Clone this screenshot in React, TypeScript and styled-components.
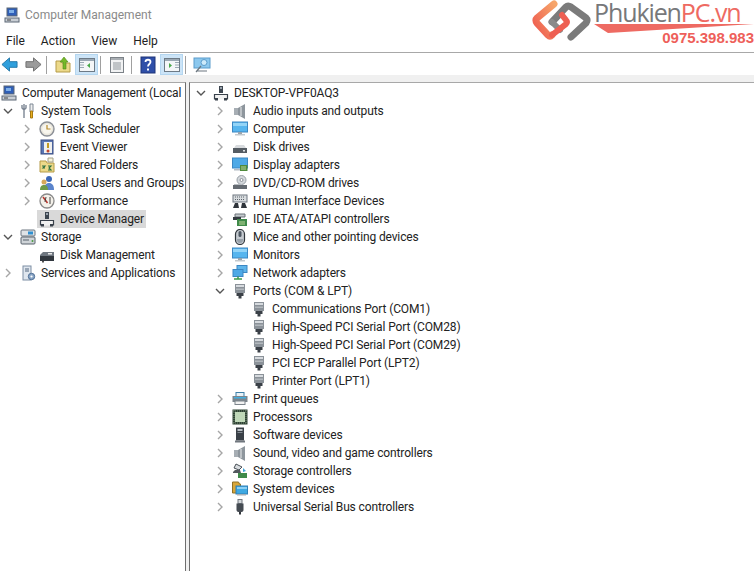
import React from "react";
import styled, { createGlobalStyle } from "styled-components";

const GlobalStyle = createGlobalStyle`
  html, body { margin: 0; padding: 0; background: #fff; }
  body { font-family: Roboto, "Open Sans", sans-serif; color: #1f1f1f; overflow: hidden; }
`;

type IconName =
  | "computer" | "tools" | "clock" | "event" | "shared" | "users" | "perf" | "device"
  | "storage" | "disk" | "services" | "audio" | "monitor" | "drive" | "display" | "dvd"
  | "hid" | "ide" | "mouse" | "network" | "port" | "printer" | "cpu" | "software"
  | "storagectl" | "system" | "usb";

const Glyph = ({ name }: { name: IconName }) => {
  switch (name) {
    case "computer":
      return (
        <>
          <rect x="3" y="1" width="10" height="8" fill="#2f5fb8" stroke="#5b6675" />
          <path d="M5 3h5v3H5z" fill="#7fb0e8" />
          <rect x="1" y="11" width="14" height="4" fill="#c9ced4" stroke="#5b6675" />
          <path d="M3 13h4" stroke="#444" />
        </>
      );
    case "tools":
      return (
        <>
          <path d="M4 1v5M2 2v3l2 2 2-2V2M4 7v8" stroke="#7d8794" strokeWidth="1.4" fill="none" />
          <path d="M10 1h3v8h-3z" fill="#efefef" stroke="#7d8794" />
          <path d="M10.5 8h2v7h-2z" fill="#e8b020" stroke="#a97a10" />
        </>
      );
    case "clock":
      return (
        <>
          <circle cx="8" cy="8" r="7" fill="#e9e6dc" stroke="#8b8f96" strokeWidth="1.4" />
          <circle cx="8" cy="8" r="4.8" fill="#f8f6ee" />
          <path d="M8 4v4h3.5" stroke="#b78a2a" strokeWidth="1.2" fill="none" />
        </>
      );
    case "event":
      return (
        <>
          <rect x="2" y="1" width="12" height="14" fill="#5a76b5" stroke="#3b4c80" />
          <rect x="5" y="3" width="8" height="11" fill="#f0f0ee" />
          <path d="M9 4v5" stroke="#c49a20" strokeWidth="2" />
          <circle cx="9" cy="12" r="1.5" fill="#c2472f" />
        </>
      );
    case "shared":
      return (
        <>
          <path d="M1 4h6l1 2h7v9H1z" fill="#ecd98a" stroke="#b59b48" />
          <path d="M9 1h5v4H9z" fill="#f6f1d8" stroke="#a3a08a" />
          <path d="M3 9h3l-2 2h2M9 9h3l-2 2 2 2H9" stroke="#2b6f40" strokeWidth="1.1" fill="none" />
        </>
      );
    case "users":
      return (
        <>
          <circle cx="10" cy="4" r="3" fill="#3c68b8" />
          <path d="M5 15c0-5 2-7 5-7s5 2 5 7z" fill="#5a84cc" />
          <circle cx="5" cy="7" r="2.5" fill="#d7a85a" />
          <path d="M1 15c0-4 2-5 4-5s4 1 4 5z" fill="#6f9a4a" />
        </>
      );
    case "perf":
      return (
        <>
          <circle cx="8" cy="8" r="7" fill="#f4f1ea" stroke="#8a8a8a" strokeWidth="1.3" />
          <path d="M4 4l4.5 6" stroke="#b9372e" strokeWidth="1.6" />
          <path d="M6 9l1-5M11 4v7" stroke="#444" strokeWidth="1" />
        </>
      );
    case "device":
      return (
        <>
          <rect x="6" y="1" width="4" height="7" fill="#3d4650" />
          <path d="M7 2h2v2H7z" fill="#9aa3ad" />
          <path d="M1.5 14.5v-5h13v5" fill="#f1f1f1" stroke="#39414b" strokeWidth="1.2" />
          <rect x="2" y="13" width="3" height="2.5" fill="#39414b" />
          <rect x="11" y="13" width="3" height="2.5" fill="#39414b" />
        </>
      );
    case "storage":
      return (
        <>
          <rect x="1" y="1" width="14" height="6" rx="1" fill="#dfe3e6" stroke="#6d7680" />
          <rect x="8" y="2.5" width="5" height="3" fill="#2f8fd0" />
          <rect x="1" y="8" width="14" height="7" rx="1" fill="#cfd4d8" stroke="#59626c" />
          <path d="M3 11h6" stroke="#59626c" />
          <circle cx="12.5" cy="12" r="1" fill="#4a9b3f" />
        </>
      );
    case "disk":
      return (
        <>
          <path d="M1 8l3-3h11v4H1z" fill="#6f7780" />
          <rect x="1" y="9" width="14" height="5" fill="#32383f" />
          <rect x="9" y="6" width="4" height="1.5" fill="#e8e8e8" />
          <rect x="3" y="14" width="2" height="1.5" fill="#555" />
        </>
      );
    case "services":
      return (
        <>
          <rect x="3" y="1" width="8" height="14" fill="#dfe6ee" stroke="#7d8ea3" />
          <path d="M5 4h4M5 6h4" stroke="#52667e" />
          <circle cx="11.5" cy="11.5" r="3.2" fill="#8aa6c6" stroke="#4f6f96" />
          <circle cx="11.5" cy="11.5" r="1.1" fill="#fff" />
        </>
      );
    case "audio":
      return (
        <>
          <rect x="2" y="5" width="4" height="7" fill="#a7aeb4" />
          <path d="M6 5l7-4v15l-7-4z" fill="#8e969d" />
          <path d="M9 4v9" stroke="#ccd1d5" strokeWidth="1.5" />
        </>
      );
    case "monitor":
      return (
        <>
          <rect x="0.5" y="1" width="15" height="10" fill="#57b5ee" stroke="#3c87c3" />
          <path d="M1 2h14v3H1z" fill="#93d4f7" />
          <rect x="6" y="11" width="4" height="2" fill="#9aa4ad" />
          <rect x="3" y="13" width="10" height="1.5" fill="#c3c9ce" />
        </>
      );
    case "drive":
      return (
        <>
          <path d="M2 9l2-3h8l2 3z" fill="#d8dbde" />
          <rect x="1" y="9" width="14" height="5" fill="#555c63" />
          <rect x="11" y="11" width="2" height="1.5" fill="#dfe3e6" />
        </>
      );
    case "display":
      return (
        <>
          <rect x="0.5" y="1" width="15" height="10" fill="#4ea9e6" stroke="#3c87c3" />
          <rect x="8" y="8" width="7.5" height="6" fill="#4f8a3c" />
          <path d="M9 10h5M9 12h5" stroke="#b9d49c" />
          <rect x="2" y="12" width="6" height="1.5" fill="#b4bcc4" />
        </>
      );
    case "dvd":
      return (
        <>
          <circle cx="9.5" cy="5" r="4.5" fill="#d4d8dc" stroke="#9aa1a8" />
          <circle cx="9.5" cy="5" r="1.5" fill="#fff" stroke="#8a9097" />
          <path d="M1 10h14v4H1z" fill="#656b72" />
          <path d="M2 9h8v1H2z" fill="#b9bec3" />
        </>
      );
    case "hid":
      return (
        <>
          <rect x="1" y="2" width="14" height="7" fill="#d8dcdf" stroke="#6e7780" />
          <path d="M3 4h10M3 6.5h10" stroke="#5c646c" strokeDasharray="1 1" />
          <path d="M1 15l2-5h3l1 5zM9 15l1-5h3l2 5z" fill="#2f353b" />
        </>
      );
    case "ide":
      return (
        <>
          <path d="M3 3h10v3H3z" fill="#c5cace" stroke="#6b7279" />
          <rect x="1" y="6" width="8" height="3" fill="#353b41" />
          <rect x="5" y="8" width="10" height="7" fill="#3f8a4a" />
          <path d="M7 11h6M7 13h6" stroke="#c0d89a" />
        </>
      );
    case "mouse":
      return (
        <>
          <rect x="3.5" y="0.5" width="9" height="15" rx="4.5" fill="#c5cad0" stroke="#30363c" strokeWidth="1.2" />
          <rect x="6.5" y="2" width="3" height="6" rx="1.5" fill="#4e5863" />
          <path d="M5 10c0 3 1 4 3 4s3-1 3-4z" fill="#98a1aa" />
        </>
      );
    case "network":
      return (
        <>
          <rect x="5" y="0.5" width="10" height="7" fill="#5fb5ea" stroke="#3c87c3" />
          <rect x="1" y="4.5" width="10" height="7" fill="#4ea9e6" stroke="#3c87c3" />
          <path d="M6 11.5v2M2 14h8" stroke="#3b9a4a" strokeWidth="1.5" />
        </>
      );
    case "port":
      return (
        <>
          <rect x="3" y="1" width="10" height="9" fill="#8b9299" />
          <path d="M4 2h8v2H4z" fill="#d6dade" />
          <path d="M4 5.5h8v1.5H4z" fill="#b2b8bd" />
          <path d="M4.5 10h7v3h-2v2.5h-3V13h-2z" fill="#3a4047" />
        </>
      );
    case "printer":
      return (
        <>
          <rect x="4" y="1.5" width="8" height="4" fill="#e8f2f8" stroke="#3d7fa8" />
          <rect x="0.5" y="5" width="15" height="6" fill="#7d858c" />
          <path d="M2 6h12v1.5H2z" fill="#42aee0" />
          <rect x="3" y="10" width="10" height="3.5" fill="#f2f2f2" stroke="#7d858c" />
        </>
      );
    case "cpu":
      return (
        <>
          <rect x="0.5" y="0.5" width="15" height="15" fill="#2c4232" />
          <rect x="3" y="3" width="10" height="10" fill="#bfd8b8" />
          <path d="M2 1v14M14 1v14M1 2h14M1 14h14" stroke="#7a8a78" strokeDasharray="1 1" />
        </>
      );
    case "software":
      return (
        <>
          <rect x="4" y="0.5" width="8" height="13" fill="#3a4047" />
          <rect x="5.5" y="2" width="5" height="2" fill="#b8bec4" />
          <rect x="5.5" y="5" width="5" height="1" fill="#848b92" />
          <rect x="3" y="13.5" width="10" height="2" fill="#70777e" />
        </>
      );
    case "storagectl":
      return (
        <>
          <path d="M4 1l6 3-3 3-5-2z" fill="#d9dde0" stroke="#4a5158" />
          <path d="M1 9l2-2h5l1 3H1z" fill="#53595f" />
          <rect x="6" y="10" width="9" height="5" fill="#3f8a4a" />
          <path d="M11 5l3 3-3 1z" fill="#42a5d8" />
        </>
      );
    case "system":
      return (
        <>
          <path d="M0.5 1h6l1 2h1v9h-8z" fill="#d8a63a" stroke="#8f7026" />
          <rect x="4" y="5" width="11.5" height="8" fill="#3fa9e2" stroke="#2f7fb5" />
          <path d="M5 6h10v2H5z" fill="#8bd0f5" />
          <rect x="5" y="13" width="9" height="1.5" fill="#a7afb6" />
        </>
      );
    case "usb":
      return (
        <>
          <rect x="6" y="0.5" width="4" height="4" fill="#d3d7da" stroke="#70777e" />
          <path d="M4.5 4.5h7V11c0 1-1 2-2 2h-3c-1 0-2-1-2-2z" fill="#454b52" />
          <rect x="7" y="13" width="2" height="2.5" fill="#30353a" />
        </>
      );
  }
};

const Icon = ({ name }: { name: IconName }) => (
  <IconSvg viewBox="0 0 16 16">
    <Glyph name={name} />
  </IconSvg>
);

const Caret = ({ open }: { open?: boolean }) => (
  <CaretSvg viewBox="0 0 10 10">
    {open ? (
      <path d="M1 3l4 4 4-4" stroke="#555" strokeWidth="1.4" fill="none" />
    ) : (
      <path d="M3 1l4 4-4 4" stroke="#a6a6a6" strokeWidth="1.4" fill="none" />
    )}
  </CaretSvg>
);

type Row = { label: string; icon: IconName; depth: number; caret?: "open" | "closed"; selected?: boolean };

const leftRows: Row[] = [
  { label: "Computer Management (Local", icon: "computer", depth: 0 },
  { label: "System Tools", icon: "tools", depth: 1, caret: "open" },
  { label: "Task Scheduler", icon: "clock", depth: 2, caret: "closed" },
  { label: "Event Viewer", icon: "event", depth: 2, caret: "closed" },
  { label: "Shared Folders", icon: "shared", depth: 2, caret: "closed" },
  { label: "Local Users and Groups", icon: "users", depth: 2, caret: "closed" },
  { label: "Performance", icon: "perf", depth: 2, caret: "closed" },
  { label: "Device Manager", icon: "device", depth: 2, selected: true },
  { label: "Storage", icon: "storage", depth: 1, caret: "open" },
  { label: "Disk Management", icon: "disk", depth: 2 },
  { label: "Services and Applications", icon: "services", depth: 1, caret: "closed" },
];

const rightRows: Row[] = [
  { label: "DESKTOP-VPF0AQ3", icon: "device", depth: 0, caret: "open" },
  { label: "Audio inputs and outputs", icon: "audio", depth: 1, caret: "closed" },
  { label: "Computer", icon: "monitor", depth: 1, caret: "closed" },
  { label: "Disk drives", icon: "drive", depth: 1, caret: "closed" },
  { label: "Display adapters", icon: "display", depth: 1, caret: "closed" },
  { label: "DVD/CD-ROM drives", icon: "dvd", depth: 1, caret: "closed" },
  { label: "Human Interface Devices", icon: "hid", depth: 1, caret: "closed" },
  { label: "IDE ATA/ATAPI controllers", icon: "ide", depth: 1, caret: "closed" },
  { label: "Mice and other pointing devices", icon: "mouse", depth: 1, caret: "closed" },
  { label: "Monitors", icon: "monitor", depth: 1, caret: "closed" },
  { label: "Network adapters", icon: "network", depth: 1, caret: "closed" },
  { label: "Ports (COM & LPT)", icon: "port", depth: 1, caret: "open" },
  { label: "Communications Port (COM1)", icon: "port", depth: 2 },
  { label: "High-Speed PCI Serial Port (COM28)", icon: "port", depth: 2 },
  { label: "High-Speed PCI Serial Port (COM29)", icon: "port", depth: 2 },
  { label: "PCI ECP Parallel Port (LPT2)", icon: "port", depth: 2 },
  { label: "Printer Port (LPT1)", icon: "port", depth: 2 },
  { label: "Print queues", icon: "printer", depth: 1, caret: "closed" },
  { label: "Processors", icon: "cpu", depth: 1, caret: "closed" },
  { label: "Software devices", icon: "software", depth: 1, caret: "closed" },
  { label: "Sound, video and game controllers", icon: "audio", depth: 1, caret: "closed" },
  { label: "Storage controllers", icon: "storagectl", depth: 1, caret: "closed" },
  { label: "System devices", icon: "system", depth: 1, caret: "closed" },
  { label: "Universal Serial Bus controllers", icon: "usb", depth: 1, caret: "closed" },
];

const TreeRows = ({ rows }: { rows: Row[] }) => (
  <>
    {rows.map((row) => (
      <TreeRow key={row.label} $depth={row.depth}>
        <CaretSlot>{row.caret && <Caret open={row.caret === "open"} />}</CaretSlot>
        <RowBody $selected={row.selected}>
          <Icon name={row.icon} />
          <RowLabel>{row.label}</RowLabel>
        </RowBody>
      </TreeRow>
    ))}
  </>
);

const Logo = () => (
  <LogoWrap>
    <svg width="66" height="44" viewBox="0 0 66 44">
      <defs>
        <linearGradient id="logoRed" x1="0" y1="1" x2="1" y2="0">
          <stop offset="0" stopColor="#ee5a4f" />
          <stop offset="1" stopColor="#f6a56a" />
        </linearGradient>
      </defs>
      <path d="M26 4L9 18Q7 20 9 23L20 35Q22 37 24 35" stroke="url(#logoRed)" strokeWidth="7" fill="none" strokeLinecap="round" />
      <path d="M24 22L38 7Q40 5 43 7L58 18Q60 20 58 23L43 37" stroke="#7b7b7b" strokeWidth="7" fill="none" strokeLinecap="round" />
      <path d="M24 22l8 8" stroke="#8a8a8a" strokeWidth="6" fill="none" strokeLinecap="round" />
      <path d="M24 35L38 24Q40 22 38 20L34 15" stroke="#ee5f52" strokeWidth="6" fill="none" strokeLinecap="round" />
    </svg>
    <LogoText>
      <LogoName>
        <span>Phukien</span>
        <LogoAccent>PC.vn</LogoAccent>
      </LogoName>
      <LogoSwoosh viewBox="0 0 160 12" preserveAspectRatio="none">
        <path d="M0 0L160 0 14 12z" fill="#ee6a62" />
      </LogoSwoosh>
      <LogoPhone>0975.398.983</LogoPhone>
    </LogoText>
  </LogoWrap>
);

export default function App() {
  return (
    <Page>
      <GlobalStyle />
      <TitleBar>
        <TitleIcon>
          <Icon name="computer" />
        </TitleIcon>
        Computer Management
      </TitleBar>
      <MenuBar>
        <MenuItem>File</MenuItem>
        <MenuItem>Action</MenuItem>
        <MenuItem>View</MenuItem>
        <MenuItem>Help</MenuItem>
      </MenuBar>
      <Toolbar>
        <ToolGroup $tail={1}>
          <ToolButton>
            <svg width="17" height="17" viewBox="0 0 18 18">
              <path d="M1 9l8-7v4h8v6H9v4z" fill="#2f9fdc" stroke="#2377a8" />
            </svg>
          </ToolButton>
          <ToolButton>
            <svg width="17" height="17" viewBox="0 0 18 18">
              <path d="M17 9L9 2v4H1v6h8v4z" fill="#9b9b9b" stroke="#6c6c6c" />
            </svg>
          </ToolButton>
        </ToolGroup>
        <ToolSep />
        <ToolGroup $tail={2}>
          <ToolButton>
            <svg width="18" height="18" viewBox="0 0 18 18">
              <path d="M2 5h5l1 2h8v9H2z" fill="#ecd98a" stroke="#b59b48" />
              <path d="M9 13V6H6l4-5 4 5h-2v7z" fill="#76b82a" stroke="#4f8a16" strokeWidth="0.6" />
            </svg>
          </ToolButton>
          <ToolButton $active>
            <svg width="18" height="18" viewBox="0 0 18 18">
              <rect x="1.5" y="2.5" width="15" height="13" fill="#f4f6f8" stroke="#6d7a86" />
              <path d="M2 3h14v2H2z" fill="#9aa8b4" />
              <path d="M2 6.5h4M2 9h4M2 11.5h4" stroke="#9aa8b4" />
              <path d="M12 7v5l-3-2.500z" fill="#49a84a" />
            </svg>
          </ToolButton>
        </ToolGroup>
        <ToolSep />
        <ToolGroup $tail={3}>
          <ToolButton>
            <svg width="18" height="18" viewBox="0 0 18 18">
              <rect x="2.5" y="1.5" width="13" height="15" fill="#f1f2f3" stroke="#7c8288" />
              <path d="M3 2h12v2H3z" fill="#a9aeb3" />
              <path d="M5 7h8M5 9h8M5 11h8M5 13h8" stroke="#8e959b" />
            </svg>
          </ToolButton>
        </ToolGroup>
        <ToolSep />
        <ToolGroup $tail={2}>
          <ToolButton>
            <svg width="18" height="18" viewBox="0 0 18 18">
              <rect x="2" y="1" width="14" height="16" fill="#2f4fa8" stroke="#1f3478" />
              <path d="M6.5 6c0-3 5-3 5 0 0 2-2.5 2-2.5 4.5" stroke="#fff" strokeWidth="1.8" fill="none" />
              <rect x="8" y="12.5" width="2" height="2" fill="#fff" />
            </svg>
          </ToolButton>
          <ToolButton $active>
            <svg width="18" height="18" viewBox="0 0 18 18">
              <rect x="1.5" y="2.5" width="15" height="13" fill="#f4f6f8" stroke="#6d7a86" />
              <path d="M2 3h14v2H2z" fill="#9aa8b4" />
              <path d="M12 6.5h4M12 9h4M12 11.5h4" stroke="#9aa8b4" />
              <path d="M6 7v5l3-2.500z" fill="#49a84a" />
            </svg>
          </ToolButton>
        </ToolGroup>
        <ToolSep />
        <ToolGroup $tail={0}>
          <ToolButton>
            <svg width="18" height="18" viewBox="0 0 18 18">
              <rect x="1" y="2" width="16" height="10" fill="#8cc8ee" stroke="#5a9ccb" />
              <circle cx="11" cy="6.5" r="3" fill="#cdeafa" stroke="#5a9ccb" />
              <path d="M8 10l-5 6M4 15h10" stroke="#6c7780" strokeWidth="1.2" />
            </svg>
          </ToolButton>
        </ToolGroup>
      </Toolbar>
      <Panes>
        <LeftPane>
          <TreeList $offset={-18}>
            <TreeRows rows={leftRows} />
          </TreeList>
        </LeftPane>
        <RightPane>
          <TreeList $offset={4}>
            <TreeRows rows={rightRows} />
          </TreeList>
        </RightPane>
      </Panes>
      <Logo />
    </Page>
  );
}

const Page = styled.div`
  position: relative;
  width: 754px;
  height: 571px;
  overflow: hidden;
  display: flex;
  flex-direction: column;
`;

const TitleBar = styled.div`
  height: 30px;
  display: flex;
  align-items: center;
  gap: 5px;
  padding-left: 4px;
  font-size: 12px;
  color: #8a8a8a;
`;

const TitleIcon = styled.span`
  display: flex;
`;

const MenuBar = styled.div`
  height: 22px;
  display: flex;
  align-items: center;
  gap: 16px;
  padding-left: 6px;
  border-bottom: 1px solid #a8a8a8;
`;

const MenuItem = styled.span`
  font-size: 12px;
  color: #222;
`;

const Toolbar = styled.div`
  height: 21px;
  padding-top: 1px;
  margin-left: -6px;
  display: flex;
  align-items: center;
`;

const ToolGroup = styled.div<{ $tail: number }>`
  display: flex;
  gap: 1px;
  padding-left: 4px;
  padding-right: ${({ $tail }) => $tail}px;
`;

const ToolButton = styled.div<{ $active?: boolean }>`
  width: 23px;
  height: 21px;
  box-sizing: border-box;
  display: flex;
  align-items: center;
  justify-content: center;
  background: ${({ $active }) => ($active ? "#cce4f7" : "transparent")};
  border: 1px solid ${({ $active }) => ($active ? "#b4d6f0" : "transparent")};
`;

const ToolSep = styled.div`
  width: 1px;
  height: 18px;
  background: #a0a0a0;
`;

const Panes = styled.div`
  flex: 1;
  padding-top: 7px;
  display: flex;
  gap: 3px;
  min-height: 0;
  background: #f0f0f0;
`;

const LeftPane = styled.div`
  width: 185px;
  flex: none;
  background: #fff;
  border-top: 1px solid #a8a8a8;
  border-right: 1px solid #6e6e6e;
  overflow: hidden;
`;

const RightPane = styled.div`
  flex: 1;
  background: #fff;
  border-top: 1px solid #a8a8a8;
  border-left: 1px solid #6e6e6e;
  overflow: hidden;
`;

const TreeList = styled.div<{ $offset: number }>`
  margin-left: ${({ $offset }) => $offset}px;
  padding-top: 1px;
`;

const TreeRow = styled.div<{ $depth: number }>`
  height: 18px;
  display: flex;
  align-items: center;
  white-space: nowrap;
  padding-left: ${({ $depth }) => $depth * 19}px;
`;

const CaretSlot = styled.span`
  width: 17px;
  padding-left: 2px;
  height: 18px;
  flex: none;
  display: flex;
  align-items: center;
`;

const CaretSvg = styled.svg`
  width: 10px;
  height: 10px;
`;

const RowBody = styled.span<{ $selected?: boolean }>`
  display: flex;
  align-items: center;
  gap: 5px;
  height: 18px;
  margin-left: -2px;
  padding: 0 2px;
  background: ${({ $selected }) => ($selected ? "#d9d9d9" : "transparent")};
`;

const IconSvg = styled.svg`
  width: 16px;
  height: 16px;
  flex: none;
`;

const RowLabel = styled.span`
  font-size: 12px;
  letter-spacing: -0.13px;
  color: #222;
`;

const LogoWrap = styled.div`
  position: absolute;
  top: 0;
  right: 0;
  display: flex;
  align-items: flex-start;
  background: #fff;
`;

const LogoText = styled.div`
  display: flex;
  flex-direction: column;
  width: 160px;
`;

const LogoName = styled.div`
  font-family: "Open Sans", sans-serif;
  font-size: 25px;
  line-height: 24px;
  color: #77787a;
  letter-spacing: -1.1px;
  white-space: nowrap;
`;

const LogoAccent = styled.span`
  color: #ee6a62;
`;

const LogoSwoosh = styled.svg`
  width: 160px;
  height: 9px;
  display: block;
`;

const LogoPhone = styled.div`
  font-family: "Liberation Sans", sans-serif;
  font-weight: 700;
  font-size: 15px;
  line-height: 9px;
  color: #ee5f5a;
  text-align: right;
`;
